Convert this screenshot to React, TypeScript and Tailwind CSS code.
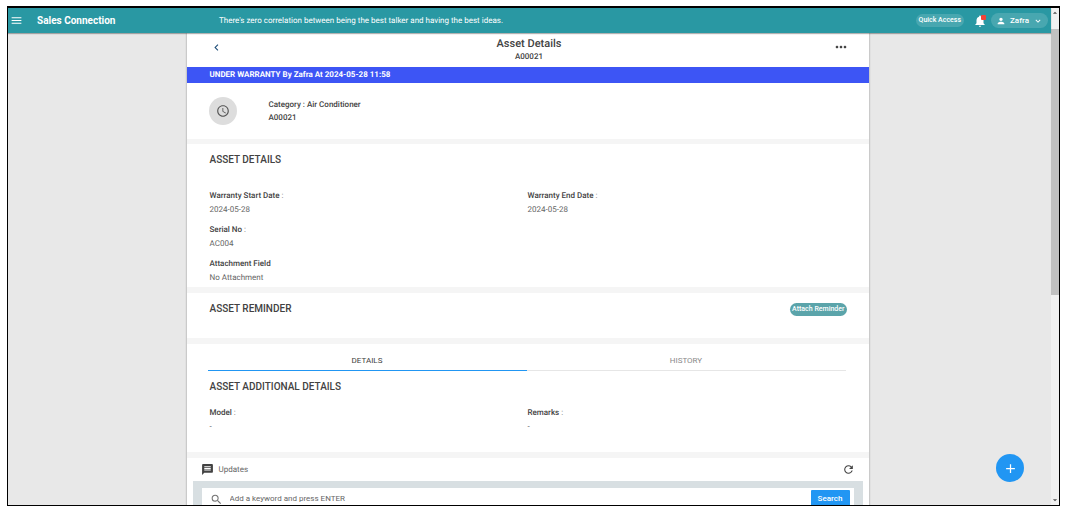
import { useState } from "react";
import type { ReactNode } from "react";
import {
  MdAccessTime,
  MdAdd,
  MdArrowDropDown,
  MdArrowDropUp,
  MdChevronLeft,
  MdExpandMore,
  MdMenu,
  MdMessage,
  MdMoreHoriz,
  MdNotifications,
  MdPerson,
  MdRefresh,
  MdSearch,
} from "react-icons/md";

type FieldItem = { label: string; value: string; colon?: boolean };

const assetFields: FieldItem[] = [
  { label: "Warranty Start Date", value: "2024-05-28", colon: true },
  { label: "Warranty End Date", value: "2024-05-28", colon: true },
  { label: "Serial No", value: "AC004", colon: true },
];

const additionalFields: FieldItem[] = [
  { label: "Model", value: "-", colon: true },
  { label: "Remarks", value: "-", colon: true },
];

function Field({ label, value, colon }: FieldItem) {
  return (
    <div className="text-[8px] leading-[14px]">
      <dt className="text-[#757575]">
        <span className="font-medium text-[#424242]">{label}</span>
        {colon && " :"}
      </dt>
      <dd className="text-[#666666]">{value}</dd>
    </div>
  );
}

function SectionTitle({ children }: { children: ReactNode }) {
  return (
    <h2 className="text-[10px] leading-4 font-medium text-[#424242] [text-rendering:auto]">
      {children}
    </h2>
  );
}

function Header() {
  return (
    <header className="relative z-10 flex h-[25px] shrink-0 items-center bg-[#2998a3] pr-[3px] pl-[2px] text-white shadow-[0_1px_1px_rgba(0,0,0,0.3)]">
      <button aria-label="Menu" className="mr-[14px]">
        <MdMenu size={13} />
      </button>
      <h1 className="w-[182px] text-[10px] font-bold [text-rendering:auto]">
        Sales Connection
      </h1>
      <p className="flex-1 text-[8px]">
        There's zero correlation between being the best talker and having the
        best ideas.
      </p>
      <button className="mr-[9px] h-[13px] rounded-full bg-white/15 px-[3px] text-[7px] font-medium">
        Quick Access
      </button>
      <button aria-label="Notifications" className="relative mr-1">
        <MdNotifications size={14} />
        <span className="absolute top-px right-px size-[5px] rounded-[1px] bg-[#f44336]" />
      </button>
      <button className="flex h-[15px] items-center rounded-full bg-white/15 px-[5px] text-[8px] font-medium">
        <MdPerson size={10} />
        <span className="mx-1">Zafra</span>
        <MdExpandMore size={10} />
      </button>
    </header>
  );
}

function Scrollbar() {
  return (
    <div className="flex w-2 shrink-0 flex-col items-center overflow-hidden bg-[#f1f1f1] text-[#505050]">
      <MdArrowDropUp size={10} className="shrink-0" />
      <div className="mt-[11px] h-[266px] w-full shrink-0 bg-[#c1c1c1]" />
      <MdArrowDropDown size={10} className="mt-auto shrink-0" />
    </div>
  );
}

export default function App() {
  const [tab, setTab] = useState("DETAILS");
  const [keyword, setKeyword] = useState("");

  return (
    <div className="h-screen bg-white pt-[6px] pr-[5px] pb-2 pl-[7px] font-[Roboto,sans-serif] [text-rendering:geometricPrecision]">
      <div className="relative flex h-full overflow-hidden border border-t-2 border-black bg-[#e8e8e8]">
        <div className="flex min-w-0 flex-1 flex-col">
          <Header />
          <main className="min-h-0 flex-1 overflow-hidden pr-1">
            <div className="mx-auto w-full max-w-[682px] bg-white shadow-[0_0_2px_rgba(0,0,0,0.4)]">
              <div className="flex h-[34px] items-center pr-5 pl-[23px]">
                <button aria-label="Back" className="w-4 pb-[6px] text-[#1f4e79]">
                  <MdChevronLeft size={13} />
                </button>
                <div className="flex-1 text-center text-[#424242]">
                  <h2 className="text-[11px] leading-[14px] font-medium">
                    Asset Details
                  </h2>
                  <p className="text-[8px] leading-[12px] font-medium">
                    A00021
                  </p>
                </div>
                <button
                  aria-label="More options"
                  className="flex w-4 justify-end pb-[6px] text-[#424242]"
                >
                  <MdMoreHoriz size={16} />
                </button>
              </div>

              <p className="h-4 bg-[#3d55f5] px-[23px] text-[8px] leading-4 font-bold text-white">
                UNDER WARRANTY By Zafra At 2024-05-28 11:58
              </p>

              <section className="flex h-14 items-center px-[22px]">
                <div className="flex size-7 items-center justify-center rounded-full bg-[#dddddd] text-[#555555]">
                  <MdAccessTime size={14} />
                </div>
                <div className="ml-8 text-[8px] leading-[13px] font-medium text-[#424242]">
                  <p>Category : Air Conditioner</p>
                  <p>A00021</p>
                </div>
              </section>

              <section className="border-t-[5px] border-[#f5f5f5] px-[23px] pt-2 pb-[2px]">
                <SectionTitle>ASSET DETAILS</SectionTitle>
                <dl className="mt-[21px] grid grid-cols-2 gap-y-[6px]">
                  {assetFields.map((f) => (
                    <Field key={f.label} {...f} />
                  ))}
                  <div className="col-span-2">
                    <Field label="Attachment Field" value="No Attachment" />
                  </div>
                </dl>
              </section>

              <section className="flex items-center justify-between border-t-[6px] border-[#f5f5f5] pt-2 pr-[22px] pb-[21px] pl-[23px]">
                <SectionTitle>ASSET REMINDER</SectionTitle>
                <button className="h-[13px] rounded-full bg-[#5ba4aa] px-[2px] text-[7px] font-medium text-white">
                  Attach Reminder
                </button>
              </section>

              <section className="border-t-[6px] border-[#f5f5f5] px-[23px] pb-[18px]">
                <div role="tablist" className="-ml-[2px] grid grid-cols-2">
                  {["DETAILS", "HISTORY"].map((name) => (
                    <button
                      key={name}
                      role="tab"
                      aria-selected={tab === name}
                      onClick={() => setTab(name)}
                      className={`border-b pt-[10px] pb-[2px] text-[8px] leading-[14px] ${
                        tab === name
                          ? "border-[#2196f3] text-[#424242]"
                          : "border-[#e6e6e6] text-[#8a8a8a]"
                      }`}
                    >
                      {name}
                    </button>
                  ))}
                </div>
                <div className="pt-2">
                  <SectionTitle>ASSET ADDITIONAL DETAILS</SectionTitle>
                </div>
                <dl className="mt-[11px] grid grid-cols-2">
                  {additionalFields.map((f) => (
                    <Field key={f.label} {...f} />
                  ))}
                </dl>
              </section>

              <section className="border-t-[6px] border-[#f5f5f5]">
                <div className="flex h-[23px] items-center px-[14px] text-[#424242]">
                  <MdMessage size={13} />
                  <h2 className="ml-[5px] flex-1 text-[8px] text-[#666666]">
                    Updates
                  </h2>
                  <button aria-label="Refresh">
                    <MdRefresh size={13} />
                  </button>
                </div>
                <div className="mx-[6px] bg-[#d8dfe2] px-[9px] py-[7px]">
                  <form
                    onSubmit={(e) => e.preventDefault()}
                    className="flex h-[22px] items-center bg-white pr-1 pl-2"
                  >
                    <MdSearch size={13} className="text-[#757575]" />
                    <input
                      aria-label="Keyword"
                      value={keyword}
                      onChange={(e) => setKeyword(e.target.value)}
                      placeholder="Add a keyword and press ENTER"
                      className="ml-[7px] min-w-0 flex-1 text-[8px] outline-none placeholder:text-[#666666]"
                    />
                    <button className="h-[18px] w-[39px] rounded-[1px] bg-[#2196f3] text-[8px] font-medium text-white">
                      Search
                    </button>
                  </form>
                </div>
              </section>
            </div>
          </main>
        </div>
        <Scrollbar />
        <button
          aria-label="Add"
          className="absolute right-[35px] bottom-[23px] flex size-7 items-center justify-center rounded-full bg-[#2196f3] text-white"
        >
          <MdAdd size={15} />
        </button>
      </div>
    </div>
  );
}
